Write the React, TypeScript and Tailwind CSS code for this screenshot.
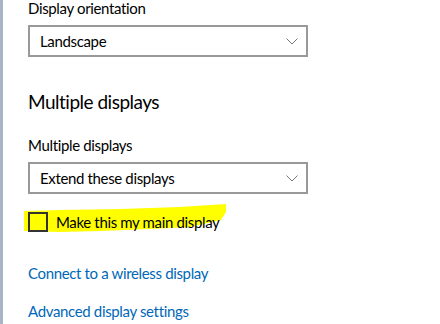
import React from "react";

const font = { fontFamily: 'Lato, "Noto Sans", sans-serif' };

function Chevron() {
  return (
    <svg width="12" height="7" viewBox="0 0 12 7" className="shrink-0">
      <path d="M0.5 0.5 L6 6 L11.5 0.5" fill="none" stroke="#777777" strokeWidth="1" />
    </svg>
  );
}

function Dropdown({ value }: { value: string }) {
  return (
    <div className="h-[32px] w-[280px] border-2 border-[#999999] flex items-center justify-between pl-[10px] pr-[8px] text-[15px] tracking-[-0.35px] text-black">
      <span>{value}</span>
      <Chevron />
    </div>
  );
}

export default function App() {
  return (
    <div className="relative w-[440px] h-[324px] bg-white overflow-hidden flex" style={font}>
      <svg className="absolute left-0 top-0 pointer-events-none" width="440" height="324" viewBox="0 0 440 324">
        <path
          d="M24 211 L60 210 L120 209 L180 207 L226 204 L226 212 L221 220 L190 227 L150 229 L100 231 L60 232 L24 231 Z"
          fill="#ffff00"
        />
      </svg>
      <div className="relative w-[3px] h-full bg-[#a7b4c3]" />
      <div className="relative flex flex-col pl-[25px]">
        <div className="text-[15px] leading-[16px] tracking-[-0.35px] text-black">Display orientation</div>
        <div className="mt-[9px]">
          <Dropdown value="Landscape" />
        </div>
        <div className="mt-[31px] text-[19px] leading-[28px] tracking-[-0.5px] text-black">Multiple displays</div>
        <div className="mt-[19px] text-[15px] leading-[20px] tracking-[-0.35px] text-black">Multiple displays</div>
        <div className="mt-[7px]">
          <Dropdown value="Extend these displays" />
        </div>
        <div className="mt-[18px] flex items-center">
          <div className="w-[20px] h-[20px] border-2 border-[#333333]" />
          <span className="ml-[8px] text-[15px] leading-[20px] tracking-[-0.35px] text-black">Make this my main display</span>
        </div>
        <div className="mt-[31px] text-[15px] leading-[20px] tracking-[-0.35px] text-[#0067b8]">Connect to a wireless display</div>
        <div className="mt-[18px] text-[15px] leading-[20px] tracking-[-0.35px] text-[#0067b8]">Advanced display settings</div>
      </div>
    </div>
  );
}
